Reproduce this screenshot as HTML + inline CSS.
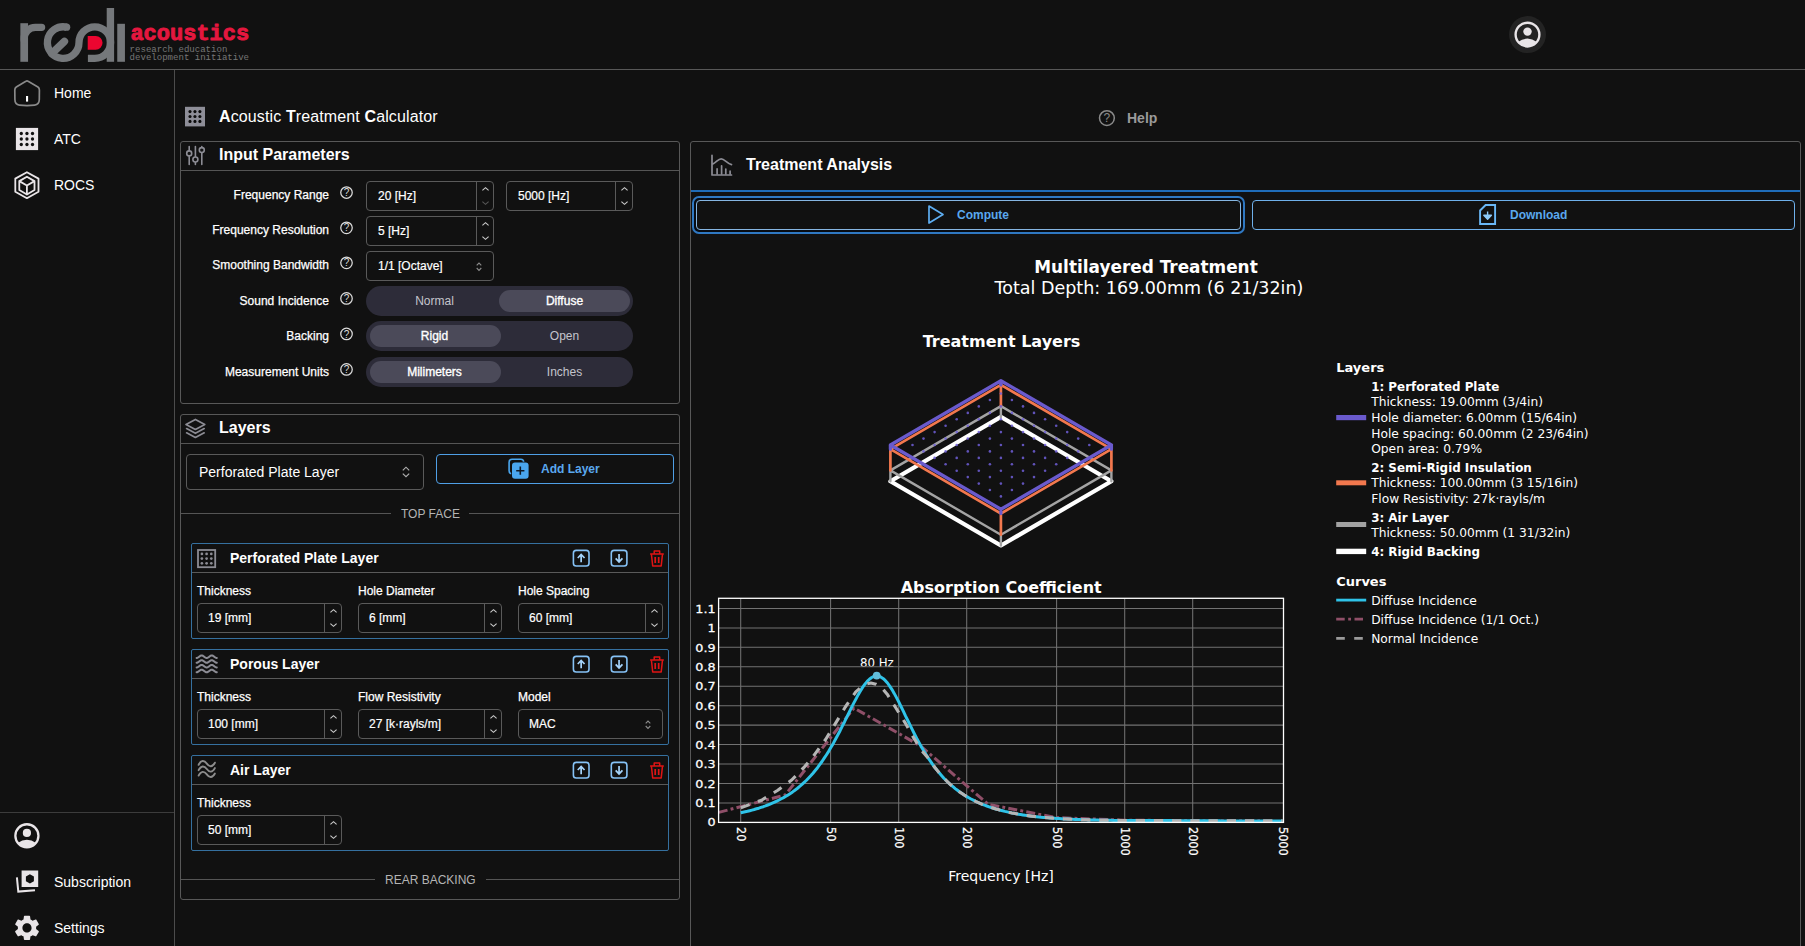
<!DOCTYPE html>
<html lang="en">
<head>
<meta charset="utf-8">
<title>Acoustic Treatment Calculator</title>
<style>
*{box-sizing:border-box}
html,body{margin:0;padding:0}
body{width:1805px;height:946px;overflow:hidden;background:#111111;color:#fff;font-family:"Liberation Sans",sans-serif;position:relative}
.abs{position:absolute}
.t{position:absolute;white-space:nowrap;line-height:16px}
.f12{font-size:12px;line-height:14px}
.f14{font-size:14px;line-height:16px}
.f16{font-size:16px;line-height:18px}
.b{font-weight:bold}
.m{-webkit-text-stroke:0.3px currentColor}
.hline{position:absolute;height:1px;background:#555}
.vline{position:absolute;width:1px;background:#555}
.panel{position:absolute;border:1px solid #585858;border-radius:3px}
.inp{position:absolute;border:1px solid #5a5a5a;border-radius:4px;height:30px;font-size:12px}
.inp .v{position:absolute;left:11px;top:7px;line-height:14px;white-space:nowrap;-webkit-text-stroke:0.2px #fff}
.inp .sep{position:absolute;right:16px;top:0;bottom:0;width:1px;background:#5a5a5a}
.inp svg{position:absolute;right:3px;top:0}
.tog{position:absolute;left:366px;width:267px;height:30px;border-radius:15px;background:#2d2c39}
.tog .sel{position:absolute;top:4px;height:22px;width:131px;border-radius:11px;background:#4b4a59}
.tog span{position:absolute;top:8px;width:131px;text-align:center;font-size:12px;line-height:14px;color:#c4c4cc}
.tog span.on{color:#fff;-webkit-text-stroke:0.35px #fff}
.card{position:absolute;left:191px;width:478px;height:96px;border:1px solid #35709f;border-radius:2px}
.card .hl{position:absolute;left:0;right:0;top:28px;height:1px;background:#5a5a5a}
.btn{position:absolute;border:1px solid #4f9fe6;border-radius:4px;height:30px}
.fig{position:absolute;left:0;top:0;pointer-events:none}
.lbl{position:absolute;font-size:12px;line-height:14px;white-space:nowrap;-webkit-text-stroke:0.25px #fff}
</style>
</head>
<body>
<!-- header -->
<div class="hline" style="left:0;top:69px;width:1805px;background:#585858"></div>
<svg class="fig" width="300" height="69" viewBox="0 0 300 69">
<g fill="none" stroke="#75787b" stroke-width="7.3">
<path d="M24.2 23.2 V61.8" stroke-width="7.7"/>
<path d="M24.2 40 V38.6 A11.2 11.2 0 0 1 35.4 27.3 H41.6" stroke-linecap="round"/>
<path d="M66.62 27.17 A15.8 15.8 0 1 0 79.00 42.6 A15.8 15.8 0 1 1 94.80 58.40 H87.9"/>
<path d="M51.83 53.58 L64.35 41.49" stroke-width="7.6" stroke-linecap="round"/>
<path d="M110.40 8 V61.8" stroke-width="7.4"/>
<path d="M121.1 23.8 V61.8" stroke-width="7.7"/>
</g>
<circle cx="66.62" cy="27.17" r="3.65" fill="#75787b"/>
<path d="M87.7 36 H95.7 A6.85 6.85 0 0 1 95.7 49.7 H87.7 Z" fill="#ec0630"/>
<text x="130.4" y="39.9" font-family="'Liberation Mono',monospace" font-weight="bold" font-size="22" fill="#e5173f" stroke="#e5173f" stroke-width="0.9" stroke-linejoin="round">acoustics</text>
<text x="129.6" y="51.7" font-family="'Liberation Mono',monospace" font-size="9.05" fill="#767676">research education</text>
<text x="129.6" y="60.4" font-family="'Liberation Mono',monospace" font-size="9.05" fill="#767676">development initiative</text>
</svg>
<!-- sidebar -->
<div class="vline" style="left:174px;top:70px;height:876px;background:#4c4c4c"></div>
<div class="hline" style="left:0;top:812px;width:174px;background:#3c3c3c"></div>
<div class="t f14" style="left:54px;top:85px">Home</div>
<div class="t f14" style="left:54px;top:131px">ATC</div>
<div class="t f14" style="left:54px;top:177px">ROCS</div>
<div class="t f14" style="left:54px;top:874px">Subscription</div>
<div class="t f14" style="left:54px;top:920px">Settings</div>
<!--SIDEICONS-->
<!-- title -->
<div class="t f16" style="left:219px;top:108px;letter-spacing:0.12px"><b>A</b>coustic <b>T</b>reatment <b>C</b>alculator</div>
<div class="t f14 b" style="left:1127px;top:110px;color:#9a9a9a">Help</div>
<!-- panel 1 -->
<div class="panel" style="left:180px;top:141px;width:500px;height:263px"></div>
<div class="hline" style="left:181px;top:170px;width:498px"></div>
<div class="t f16 b" style="left:219px;top:146px">Input Parameters</div>
<div class="lbl" style="right:1476px;top:188px">Frequency Range</div>
<div class="lbl" style="right:1476px;top:223px">Frequency Resolution</div>
<div class="lbl" style="right:1476px;top:258px">Smoothing Bandwidth</div>
<div class="lbl" style="right:1476px;top:294px">Sound Incidence</div>
<div class="lbl" style="right:1476px;top:329px">Backing</div>
<div class="lbl" style="right:1476px;top:365px">Measurement Units</div>
<div class="inp" style="left:366px;top:181px;width:128px"><span class="v">20 [Hz]</span><i class="sep"></i><svg width="11" height="28" viewBox="0 0 11 30" preserveAspectRatio="none" style="position:absolute;right:2.5px;top:0"><path d="M2.4 9 L5.5 6 L8.6 9" fill="none" stroke="#c8c8c8" stroke-width="1.1"/><path d="M2.4 21 L5.5 24 L8.6 21" fill="none" stroke="#555" stroke-width="1.1"/></svg></div>
<div class="inp" style="left:506px;top:181px;width:127px"><span class="v">5000 [Hz]</span><i class="sep"></i><svg width="11" height="28" viewBox="0 0 11 30" preserveAspectRatio="none" style="position:absolute;right:2.5px;top:0"><path d="M2.4 9 L5.5 6 L8.6 9" fill="none" stroke="#c8c8c8" stroke-width="1.1"/><path d="M2.4 21 L5.5 24 L8.6 21" fill="none" stroke="#c8c8c8" stroke-width="1.1"/></svg></div>
<div class="inp" style="left:366px;top:216px;width:128px"><span class="v">5 [Hz]</span><i class="sep"></i><svg width="11" height="28" viewBox="0 0 11 30" preserveAspectRatio="none" style="position:absolute;right:2.5px;top:0"><path d="M2.4 9 L5.5 6 L8.6 9" fill="none" stroke="#c8c8c8" stroke-width="1.1"/><path d="M2.4 21 L5.5 24 L8.6 21" fill="none" stroke="#c8c8c8" stroke-width="1.1"/></svg></div>
<div class="inp" style="left:366px;top:251px;width:128px"><span class="v">1/1 [Octave]</span><svg width="8" height="12" viewBox="0 0 8 12" style="position:absolute;right:10px;top:9.3px"><path d="M1.7 4.4 L4 2 L6.3 4.4 M1.7 7 L4 9.4 L6.3 7" fill="none" stroke="#8c8c8c" stroke-width="1.1"/></svg></div>
<div class="tog" style="top:286px"><i class="sel" style="left:133px"></i><span style="left:3px">Normal</span><span class="on" style="left:133px">Diffuse</span></div>
<div class="tog" style="top:321px"><i class="sel" style="left:4px"></i><span class="on" style="left:3px">Rigid</span><span style="left:133px">Open</span></div>
<div class="tog" style="top:357px"><i class="sel" style="left:4px"></i><span class="on" style="left:3px">Milimeters</span><span style="left:133px">Inches</span></div>
<!-- panel 2 -->
<div class="panel" style="left:180px;top:414px;width:500px;height:486px"></div>
<div class="hline" style="left:181px;top:443px;width:498px"></div>
<div class="t f16 b" style="left:219px;top:419px">Layers</div>
<div class="inp" style="left:186px;top:454px;width:238px;height:36px"><span class="v" style="left:12px;top:9px;font-size:14px;line-height:16px;-webkit-text-stroke:0">Perforated Plate Layer</span><svg width="10" height="14" viewBox="0 0 10 14" style="position:absolute;right:12.5px;top:9.7px"><path d="M1.8 5.3 L5 2.2 L8.2 5.3 M1.8 8.6 L5 11.7 L8.2 8.6" fill="none" stroke="#b0b0b0" stroke-width="1.15"/></svg></div>
<div class="btn" style="left:436px;top:454px;width:238px"></div>
<div class="t f12 b" style="left:541px;top:462px;color:#5aa8ee">Add Layer</div>
<div class="hline" style="left:181px;top:513px;width:210px"></div>
<div class="hline" style="left:469px;top:513px;width:210px"></div>
<div class="t f12" style="left:401px;top:507px;color:#b4b4b4">TOP FACE</div>
<div class="hline" style="left:181px;top:879px;width:194px"></div>
<div class="hline" style="left:486px;top:879px;width:193px"></div>
<div class="t f12" style="left:385px;top:873px;color:#b4b4b4">REAR BACKING</div>
<!-- cards -->
<div class="card" style="top:543px"><i class="hl"></i></div>
<div class="card" style="top:649px"><i class="hl"></i></div>
<div class="card" style="top:755px"><i class="hl"></i></div>
<div class="t f14 b" style="left:230px;top:550px">Perforated Plate Layer</div>
<div class="t f14 b" style="left:230px;top:656px">Porous Layer</div>
<div class="t f14 b" style="left:230px;top:762px">Air Layer</div>
<div class="lbl" style="left:197px;top:584px">Thickness</div>
<div class="lbl" style="left:358px;top:584px">Hole Diameter</div>
<div class="lbl" style="left:518px;top:584px">Hole Spacing</div>
<div class="lbl" style="left:197px;top:690px">Thickness</div>
<div class="lbl" style="left:358px;top:690px">Flow Resistivity</div>
<div class="lbl" style="left:518px;top:690px">Model</div>
<div class="lbl" style="left:197px;top:796px">Thickness</div>
<div class="inp" style="left:197px;top:603px;width:145px;height:30px"><span class="v" style="left:10px">19 [mm]</span><i class="sep"></i><svg width="11" height="28" viewBox="0 0 11 30" preserveAspectRatio="none" style="position:absolute;right:2.5px;top:0"><path d="M2.4 9 L5.5 6 L8.6 9" fill="none" stroke="#c8c8c8" stroke-width="1.1"/><path d="M2.4 21 L5.5 24 L8.6 21" fill="none" stroke="#c8c8c8" stroke-width="1.1"/></svg></div>
<div class="inp" style="left:358px;top:603px;width:144px;height:30px"><span class="v" style="left:10px">6 [mm]</span><i class="sep"></i><svg width="11" height="28" viewBox="0 0 11 30" preserveAspectRatio="none" style="position:absolute;right:2.5px;top:0"><path d="M2.4 9 L5.5 6 L8.6 9" fill="none" stroke="#c8c8c8" stroke-width="1.1"/><path d="M2.4 21 L5.5 24 L8.6 21" fill="none" stroke="#c8c8c8" stroke-width="1.1"/></svg></div>
<div class="inp" style="left:518px;top:603px;width:145px;height:30px"><span class="v" style="left:10px">60 [mm]</span><i class="sep"></i><svg width="11" height="28" viewBox="0 0 11 30" preserveAspectRatio="none" style="position:absolute;right:2.5px;top:0"><path d="M2.4 9 L5.5 6 L8.6 9" fill="none" stroke="#c8c8c8" stroke-width="1.1"/><path d="M2.4 21 L5.5 24 L8.6 21" fill="none" stroke="#c8c8c8" stroke-width="1.1"/></svg></div>
<div class="inp" style="left:197px;top:709px;width:145px;height:30px"><span class="v" style="left:10px">100 [mm]</span><i class="sep"></i><svg width="11" height="28" viewBox="0 0 11 30" preserveAspectRatio="none" style="position:absolute;right:2.5px;top:0"><path d="M2.4 9 L5.5 6 L8.6 9" fill="none" stroke="#c8c8c8" stroke-width="1.1"/><path d="M2.4 21 L5.5 24 L8.6 21" fill="none" stroke="#c8c8c8" stroke-width="1.1"/></svg></div>
<div class="inp" style="left:358px;top:709px;width:144px;height:30px"><span class="v" style="left:10px">27 [k·rayls/m]</span><i class="sep"></i><svg width="11" height="28" viewBox="0 0 11 30" preserveAspectRatio="none" style="position:absolute;right:2.5px;top:0"><path d="M2.4 9 L5.5 6 L8.6 9" fill="none" stroke="#c8c8c8" stroke-width="1.1"/><path d="M2.4 21 L5.5 24 L8.6 21" fill="none" stroke="#c8c8c8" stroke-width="1.1"/></svg></div>
<div class="inp" style="left:518px;top:709px;width:145px;height:30px"><span class="v" style="left:10px">MAC</span><svg width="8" height="12" viewBox="0 0 8 12" style="position:absolute;right:10px;top:9.3px"><path d="M1.7 4.4 L4 2 L6.3 4.4 M1.7 7 L4 9.4 L6.3 7" fill="none" stroke="#8c8c8c" stroke-width="1.1"/></svg></div>
<div class="inp" style="left:197px;top:815px;width:145px;height:30px"><span class="v" style="left:10px">50 [mm]</span><i class="sep"></i><svg width="11" height="28" viewBox="0 0 11 30" preserveAspectRatio="none" style="position:absolute;right:2.5px;top:0"><path d="M2.4 9 L5.5 6 L8.6 9" fill="none" stroke="#c8c8c8" stroke-width="1.1"/><path d="M2.4 21 L5.5 24 L8.6 21" fill="none" stroke="#c8c8c8" stroke-width="1.1"/></svg></div>
<!-- right panel -->
<div class="abs" style="left:690px;top:141px;width:1111px;height:820px;border:1px solid #585858;border-radius:3px"></div>
<div class="abs" style="left:691px;top:190px;width:1109px;height:2px;background:#1f6cb8"></div>
<div class="t f16 b" style="left:746px;top:156px">Treatment Analysis</div>
<div class="abs" style="left:692px;top:196px;width:553px;height:38px;border:2px solid #2f78c2;border-radius:7px;background:#070b12"></div>
<div class="btn" style="left:696px;top:200px;width:545px;background:#111;border-color:#86b6e2"></div>
<div class="btn" style="left:1252px;top:200px;width:543px;border-color:#6fb0ea"></div>
<div class="t f12 b" style="left:957px;top:208px;color:#5aa8ee">Compute</div>
<div class="t f12 b" style="left:1510px;top:208px;color:#5aa8ee">Download</div>
<svg class="fig" width="1805" height="946" viewBox="0 0 1805 946"><path d="M25.9 81.2 Q27 80.5 28.1 81.2 L37.9 87 Q39.4 88 39.4 90 L39.3 99.6 Q39.2 104.7 34.6 105.2 Q27 106 19.4 105.2 Q14.9 104.7 14.9 99.6 L14.8 90 Q14.8 88 16.3 87 Z" fill="none" stroke="#8a8a8a" stroke-width="1.7" stroke-linejoin="round"/>
<rect x="26" y="96" width="2.1" height="5.6" fill="#fff"/>
<rect x="15.9" y="127.9" width="22.2" height="22.2" fill="#e9e5e8"/>
<circle cx="21.3" cy="133.5" r="1.65" fill="#111"/>
<circle cx="21.3" cy="139" r="1.65" fill="#111"/>
<circle cx="21.3" cy="144.5" r="1.65" fill="#111"/>
<circle cx="26.95" cy="133.5" r="1.65" fill="#111"/>
<circle cx="26.95" cy="139" r="1.65" fill="#111"/>
<circle cx="26.95" cy="144.5" r="1.65" fill="#111"/>
<circle cx="32.5" cy="133.5" r="1.65" fill="#111"/>
<circle cx="32.5" cy="139" r="1.65" fill="#111"/>
<circle cx="32.5" cy="144.5" r="1.65" fill="#111"/>
<g fill="none" stroke="#e9e5e8" stroke-width="1.8" stroke-linejoin="round"><path d="M26.9 172.2 L38.5 178.6 V191.8 L26.9 198.2 L15.3 191.8 V178.6 Z"/><path d="M26.9 176.7 L34.5 181.1 V190 L26.9 194.5 L19.3 190 V181.1 Z"/><path d="M19.3 181.1 L26.9 185.5 L34.5 181.1 M26.9 185.5 V194.5"/></g>
<g transform="translate(26.9 835.8) scale(1.0)"><circle cx="0" cy="0" r="11.55" fill="none" stroke="#e9e5e8" stroke-width="2.3"/><circle cx="0" cy="-2.9" r="4.1" fill="#e9e5e8"/><path d="M-9.2 7.3 Q0 0.4 9.2 7.3 A11.75 11.75 0 0 1 -9.2 7.3 Z" fill="#e9e5e8"/></g>
<path d="M21.6 870.6 H38.2 V887 H21.6 Z M29.9 874.2 L33.9 876.5 V881.2 L29.9 883.5 L25.9 881.2 V876.5 Z" fill="#e9e5e8" fill-rule="evenodd"/>
<path d="M16.9 877.4 L18.3 891.6 L35 890.2" fill="none" stroke="#e9e5e8" stroke-width="2"/>
<path transform="translate(11.76 912.66) scale(1.27)" d="M19.14 12.94c.04-.3.06-.61.06-.94 0-.32-.02-.64-.07-.94l2.03-1.58c.18-.14.23-.41.12-.61l-1.92-3.32c-.12-.22-.37-.29-.59-.22l-2.39.96c-.5-.38-1.03-.7-1.62-.94l-.36-2.54c-.04-.24-.24-.41-.48-.41h-3.84c-.24 0-.43.17-.47.41l-.36 2.54c-.59.24-1.13.57-1.62.94l-2.39-.96c-.22-.08-.47 0-.59.22L2.74 8.87c-.12.21-.08.47.12.61l2.03 1.58c-.05.3-.09.63-.09.94s.02.64.07.94l-2.03 1.58c-.18.14-.23.41-.12.61l1.92 3.32c.12.22.37.29.59.22l2.39-.96c.5.38 1.03.7 1.62.94l.36 2.54c.05.24.24.41.48.41h3.84c.24 0 .44-.17.47-.41l.36-2.54c.59-.24 1.13-.56 1.62-.94l2.39.96c.22.08.47 0 .59-.22l1.92-3.32c.12-.22.07-.47-.12-.61l-2.01-1.58zM12 15.6c-1.98 0-3.6-1.62-3.6-3.6s1.62-3.6 3.6-3.6 3.6 1.62 3.6 3.6-1.62 3.6-3.6 3.6z" fill="#e9e5e8"/>
<circle cx="1527.5" cy="34.6" r="18.5" fill="#232323"/>
<g transform="translate(1527.5 34.6) scale(1.03)"><circle cx="0" cy="0" r="11.55" fill="none" stroke="#e9e5e8" stroke-width="2.3"/><circle cx="0" cy="-2.9" r="4.1" fill="#e9e5e8"/><path d="M-9.2 7.3 Q0 0.4 9.2 7.3 A11.75 11.75 0 0 1 -9.2 7.3 Z" fill="#e9e5e8"/></g>
<rect x="185" y="106.8" width="20" height="19.6" fill="#8e8e98"/>
<circle cx="190" cy="111.6" r="1.55" fill="#0c0c0c"/>
<circle cx="190" cy="116.5" r="1.55" fill="#0c0c0c"/>
<circle cx="190" cy="121.4" r="1.55" fill="#0c0c0c"/>
<circle cx="194.95" cy="111.6" r="1.55" fill="#0c0c0c"/>
<circle cx="194.95" cy="116.5" r="1.55" fill="#0c0c0c"/>
<circle cx="194.95" cy="121.4" r="1.55" fill="#0c0c0c"/>
<circle cx="199.9" cy="111.6" r="1.55" fill="#0c0c0c"/>
<circle cx="199.9" cy="116.5" r="1.55" fill="#0c0c0c"/>
<circle cx="199.9" cy="121.4" r="1.55" fill="#0c0c0c"/>
<circle cx="1106.9" cy="118.1" r="7.4" fill="none" stroke="#8a8a8a" stroke-width="1.5"/>
<text x="1106.9" y="122.4" text-anchor="middle" font-family="'Liberation Sans',sans-serif" font-size="12" fill="#8a8a8a">?</text>
<circle cx="346.5" cy="192.5" r="5.75" fill="none" stroke="#dcdcdc" stroke-width="1.25"/>
<text x="346.5" y="196.1" text-anchor="middle" font-family="'Liberation Sans',sans-serif" font-size="10" fill="#dcdcdc">?</text>
<circle cx="346.5" cy="227.8" r="5.75" fill="none" stroke="#dcdcdc" stroke-width="1.25"/>
<text x="346.5" y="231.4" text-anchor="middle" font-family="'Liberation Sans',sans-serif" font-size="10" fill="#dcdcdc">?</text>
<circle cx="346.5" cy="262.8" r="5.75" fill="none" stroke="#dcdcdc" stroke-width="1.25"/>
<text x="346.5" y="266.4" text-anchor="middle" font-family="'Liberation Sans',sans-serif" font-size="10" fill="#dcdcdc">?</text>
<circle cx="346.5" cy="298.4" r="5.75" fill="none" stroke="#dcdcdc" stroke-width="1.25"/>
<text x="346.5" y="302.0" text-anchor="middle" font-family="'Liberation Sans',sans-serif" font-size="10" fill="#dcdcdc">?</text>
<circle cx="346.5" cy="333.9" r="5.75" fill="none" stroke="#dcdcdc" stroke-width="1.25"/>
<text x="346.5" y="337.5" text-anchor="middle" font-family="'Liberation Sans',sans-serif" font-size="10" fill="#dcdcdc">?</text>
<circle cx="346.5" cy="369.4" r="5.75" fill="none" stroke="#dcdcdc" stroke-width="1.25"/>
<text x="346.5" y="373.0" text-anchor="middle" font-family="'Liberation Sans',sans-serif" font-size="10" fill="#dcdcdc">?</text>
<g fill="none" stroke="#8c8c94" stroke-width="1.6" stroke-linecap="round"><path d="M189.2 146.5 V164.5 M195.4 146.5 V164.5 M201.8 146.5 V164.5"/></g>
<circle cx="189.2" cy="153.4" r="2.5" fill="#111" stroke="#8c8c94" stroke-width="1.6"/>
<circle cx="195.4" cy="159.5" r="2.5" fill="#111" stroke="#8c8c94" stroke-width="1.6"/>
<circle cx="201.8" cy="150.1" r="2.5" fill="#111" stroke="#8c8c94" stroke-width="1.6"/>
<g fill="none" stroke="#8c8c94" stroke-width="1.7" stroke-linejoin="round" stroke-linecap="round"><path d="M195.4 419.4 L204.8 424.4 L195.4 429.4 L186 424.4 Z"/><path d="M186.6 428.6 L195.4 433.3 L204.2 428.6"/><path d="M186.6 432.8 L195.4 437.5 L204.2 432.8"/></g>
<g fill="none" stroke="#8c8c94" stroke-width="1.7" stroke-linecap="round" stroke-linejoin="round"><path d="M712 155.3 V175 H731.5"/><path d="M712.8 164 C716.5 162.5 718 158.8 721.2 158.8 C724.5 158.8 727 163.5 731.5 164.6"/><path d="M717.1 168.8 V174 M721.6 165.8 V174 M725.8 169 V174 M730.1 171.2 V174"/></g>
<rect x="198" y="550" width="17.2" height="17.2" fill="none" stroke="#8c8c94" stroke-width="1.8"/>
<circle cx="201.9" cy="553.9" r="1.35" fill="#8c8c94"/>
<circle cx="201.9" cy="558.6" r="1.35" fill="#8c8c94"/>
<circle cx="201.9" cy="563.3" r="1.35" fill="#8c8c94"/>
<circle cx="206.6" cy="553.9" r="1.35" fill="#8c8c94"/>
<circle cx="206.6" cy="558.6" r="1.35" fill="#8c8c94"/>
<circle cx="206.6" cy="563.3" r="1.35" fill="#8c8c94"/>
<circle cx="211.3" cy="553.9" r="1.35" fill="#8c8c94"/>
<circle cx="211.3" cy="558.6" r="1.35" fill="#8c8c94"/>
<circle cx="211.3" cy="563.3" r="1.35" fill="#8c8c94"/>
<path d="M196.60 657.95 L197.10 657.89 L197.61 657.71 L198.12 657.43 L198.62 657.09 L199.12 656.70 L199.63 656.31 L200.13 655.97 L200.64 655.69 L201.15 655.51 L201.65 655.45 L202.16 655.51 L202.66 655.69 L203.16 655.97 L203.67 656.31 L204.18 656.70 L204.68 657.09 L205.19 657.43 L205.69 657.71 L206.19 657.89 L206.70 657.95 L207.21 657.89 L207.71 657.71 L208.22 657.43 L208.72 657.09 L209.22 656.70 L209.73 656.31 L210.24 655.97 L210.74 655.69 L211.25 655.51 L211.75 655.45 L212.25 655.51 L212.76 655.69 L213.27 655.97 L213.77 656.31 L214.28 656.70 L214.78 657.09 L215.29 657.43 L215.79 657.71 L216.30 657.89 L216.80 657.95" fill="none" stroke="#8c8c94" stroke-width="2" stroke-linecap="round" stroke-linejoin="round"/>
<path d="M196.60 662.75 L197.10 662.69 L197.61 662.51 L198.12 662.23 L198.62 661.89 L199.12 661.50 L199.63 661.11 L200.13 660.77 L200.64 660.49 L201.15 660.31 L201.65 660.25 L202.16 660.31 L202.66 660.49 L203.16 660.77 L203.67 661.11 L204.18 661.50 L204.68 661.89 L205.19 662.23 L205.69 662.51 L206.19 662.69 L206.70 662.75 L207.21 662.69 L207.71 662.51 L208.22 662.23 L208.72 661.89 L209.22 661.50 L209.73 661.11 L210.24 660.77 L210.74 660.49 L211.25 660.31 L211.75 660.25 L212.25 660.31 L212.76 660.49 L213.27 660.77 L213.77 661.11 L214.28 661.50 L214.78 661.89 L215.29 662.23 L215.79 662.51 L216.30 662.69 L216.80 662.75" fill="none" stroke="#8c8c94" stroke-width="2" stroke-linecap="round" stroke-linejoin="round"/>
<path d="M196.60 667.45 L197.10 667.39 L197.61 667.21 L198.12 666.93 L198.62 666.59 L199.12 666.20 L199.63 665.81 L200.13 665.47 L200.64 665.19 L201.15 665.01 L201.65 664.95 L202.16 665.01 L202.66 665.19 L203.16 665.47 L203.67 665.81 L204.18 666.20 L204.68 666.59 L205.19 666.93 L205.69 667.21 L206.19 667.39 L206.70 667.45 L207.21 667.39 L207.71 667.21 L208.22 666.93 L208.72 666.59 L209.22 666.20 L209.73 665.81 L210.24 665.47 L210.74 665.19 L211.25 665.01 L211.75 664.95 L212.25 665.01 L212.76 665.19 L213.27 665.47 L213.77 665.81 L214.28 666.20 L214.78 666.59 L215.29 666.93 L215.79 667.21 L216.30 667.39 L216.80 667.45" fill="none" stroke="#8c8c94" stroke-width="2" stroke-linecap="round" stroke-linejoin="round"/>
<path d="M196.60 672.25 L197.10 672.19 L197.61 672.01 L198.12 671.73 L198.62 671.39 L199.12 671.00 L199.63 670.61 L200.13 670.27 L200.64 669.99 L201.15 669.81 L201.65 669.75 L202.16 669.81 L202.66 669.99 L203.16 670.27 L203.67 670.61 L204.18 671.00 L204.68 671.39 L205.19 671.73 L205.69 672.01 L206.19 672.19 L206.70 672.25 L207.21 672.19 L207.71 672.01 L208.22 671.73 L208.72 671.39 L209.22 671.00 L209.73 670.61 L210.24 670.27 L210.74 669.99 L211.25 669.81 L211.75 669.75 L212.25 669.81 L212.76 669.99 L213.27 670.27 L213.77 670.61 L214.28 671.00 L214.78 671.39 L215.29 671.73 L215.79 672.01 L216.30 672.19 L216.80 672.25" fill="none" stroke="#8c8c94" stroke-width="2" stroke-linecap="round" stroke-linejoin="round"/>
<path d="M198.6 764.8 C201 760.0 204.2 760.0 206.8 763.6 C209.4 767.2 212.4 767.2 214.9 762.7" fill="none" stroke="#8c8c8c" stroke-width="1.9" stroke-linecap="round"/>
<path d="M198.6 770.2 C201 765.4 204.2 765.4 206.8 769.0 C209.4 772.6 212.4 772.6 214.9 768.1" fill="none" stroke="#8c8c8c" stroke-width="1.9" stroke-linecap="round"/>
<path d="M198.6 775.6 C201 770.8 204.2 770.8 206.8 774.4 C209.4 778.0 212.4 778.0 214.9 773.5" fill="none" stroke="#8c8c8c" stroke-width="1.9" stroke-linecap="round"/>
<rect x="573.4" y="550.4" width="15.6" height="15.6" rx="2.8" fill="none" stroke="#86c2f6" stroke-width="1.6"/>
<path d="M581.15 562.2 V554.6 M577.75 558 L581.15 554.4 L584.55 558" fill="none" stroke="#a5d3fa" stroke-width="1.7"/>
<rect x="611.3" y="550.4" width="15.6" height="15.6" rx="2.8" fill="none" stroke="#86c2f6" stroke-width="1.6"/>
<path d="M619.05 554.1 V561.7 M615.65 558.3 L619.05 561.9 L622.4499999999999 558.3" fill="none" stroke="#a5d3fa" stroke-width="1.7"/>
<g fill="none" stroke="#e01414" stroke-width="1.5" stroke-linejoin="round"><path d="M650.0999999999999 553.9 H663.8 M654.1999999999999 553.6999999999999 V550.9 H659.6999999999999 V553.6999999999999"/><path d="M651.4 554.0999999999999 L652.6999999999999 565.9 H661.1999999999999 L662.5 554.0999999999999"/><path d="M655.1999999999999 556.9 V562.9 M658.6999999999999 556.9 V562.9" stroke-width="1.7"/></g>
<rect x="573.4" y="656.4" width="15.6" height="15.6" rx="2.8" fill="none" stroke="#86c2f6" stroke-width="1.6"/>
<path d="M581.15 668.2 V660.6 M577.75 664 L581.15 660.4 L584.55 664" fill="none" stroke="#a5d3fa" stroke-width="1.7"/>
<rect x="611.3" y="656.4" width="15.6" height="15.6" rx="2.8" fill="none" stroke="#86c2f6" stroke-width="1.6"/>
<path d="M619.05 660.1 V667.7 M615.65 664.3 L619.05 667.9 L622.4499999999999 664.3" fill="none" stroke="#a5d3fa" stroke-width="1.7"/>
<g fill="none" stroke="#e01414" stroke-width="1.5" stroke-linejoin="round"><path d="M650.0999999999999 659.9 H663.8 M654.1999999999999 659.6999999999999 V656.9 H659.6999999999999 V659.6999999999999"/><path d="M651.4 660.0999999999999 L652.6999999999999 671.9 H661.1999999999999 L662.5 660.0999999999999"/><path d="M655.1999999999999 662.9 V668.9 M658.6999999999999 662.9 V668.9" stroke-width="1.7"/></g>
<rect x="573.4" y="762.4" width="15.6" height="15.6" rx="2.8" fill="none" stroke="#86c2f6" stroke-width="1.6"/>
<path d="M581.15 774.2 V766.6 M577.75 770 L581.15 766.4 L584.55 770" fill="none" stroke="#a5d3fa" stroke-width="1.7"/>
<rect x="611.3" y="762.4" width="15.6" height="15.6" rx="2.8" fill="none" stroke="#86c2f6" stroke-width="1.6"/>
<path d="M619.05 766.1 V773.7 M615.65 770.3 L619.05 773.9 L622.4499999999999 770.3" fill="none" stroke="#a5d3fa" stroke-width="1.7"/>
<g fill="none" stroke="#e01414" stroke-width="1.5" stroke-linejoin="round"><path d="M650.0999999999999 765.9 H663.8 M654.1999999999999 765.6999999999999 V762.9 H659.6999999999999 V765.6999999999999"/><path d="M651.4 766.0999999999999 L652.6999999999999 777.9 H661.1999999999999 L662.5 766.0999999999999"/><path d="M655.1999999999999 768.9 V774.9 M658.6999999999999 768.9 V774.9" stroke-width="1.7"/></g>
<path d="M929 206 L943 214.5 L929 223 Z" fill="none" stroke="#5eaef2" stroke-width="1.7" stroke-linejoin="round"/>
<path d="M1485.6 205 H1495.1 V224 H1480.1 V210.5 Z" fill="none" stroke="#6ab8f7" stroke-width="1.9" stroke-linejoin="miter"/>
<path d="M1487.6 211.4 V216 M1483.8 215.2 H1491.4 L1487.6 219.2 Z" fill="#8ccafa" stroke="#8ccafa" stroke-width="1.4" stroke-linejoin="round"/>
<rect x="509.1" y="459.2" width="14.6" height="14.6" rx="3" fill="none" stroke="#4aa6ee" stroke-width="1.6"/>
<rect x="511.2" y="461.8" width="18" height="17.6" rx="3.4" fill="#111"/>
<rect x="512" y="462.5" width="16.6" height="16.3" rx="3" fill="#4aa6ee"/>
<path d="M520.3 466.6 V474.8 M516.2 470.7 H524.4" stroke="#0e1a28" stroke-width="1.6"/></svg>

<svg class="fig" width="1805" height="946" viewBox="0 0 1805 946">
<g font-family="'DejaVu Sans','Liberation Sans',sans-serif" fill="#fff">
<text x="1146" y="272.7" text-anchor="middle" font-size="16.9" font-weight="bold">Multilayered Treatment</text>
<text x="1149" y="294.4" text-anchor="middle" font-size="17.5">Total Depth: 169.00mm (6 21/32in)</text>
<text x="1001.5" y="347.1" text-anchor="middle" font-size="16" font-weight="bold">Treatment Layers</text>
<text x="1001.2" y="593.4" text-anchor="middle" font-size="16" font-weight="bold">Absorption Coefficient</text>
<text x="1001" y="880.8" text-anchor="middle" font-size="14">Frequency [Hz]</text>
<g font-size="11.3"><text transform="translate(715.6 826.4) scale(1.13 1)" x="0" y="0" text-anchor="end" stroke="#fff" stroke-width="0.25">0</text><text transform="translate(715.6 807.0) scale(1.13 1)" x="0" y="0" text-anchor="end" stroke="#fff" stroke-width="0.25">0.1</text><text transform="translate(715.6 787.6) scale(1.13 1)" x="0" y="0" text-anchor="end" stroke="#fff" stroke-width="0.25">0.2</text><text transform="translate(715.6 768.1) scale(1.13 1)" x="0" y="0" text-anchor="end" stroke="#fff" stroke-width="0.25">0.3</text><text transform="translate(715.6 748.7) scale(1.13 1)" x="0" y="0" text-anchor="end" stroke="#fff" stroke-width="0.25">0.4</text><text transform="translate(715.6 729.2) scale(1.13 1)" x="0" y="0" text-anchor="end" stroke="#fff" stroke-width="0.25">0.5</text><text transform="translate(715.6 709.8) scale(1.13 1)" x="0" y="0" text-anchor="end" stroke="#fff" stroke-width="0.25">0.6</text><text transform="translate(715.6 690.4) scale(1.13 1)" x="0" y="0" text-anchor="end" stroke="#fff" stroke-width="0.25">0.7</text><text transform="translate(715.6 670.9) scale(1.13 1)" x="0" y="0" text-anchor="end" stroke="#fff" stroke-width="0.25">0.8</text><text transform="translate(715.6 651.5) scale(1.13 1)" x="0" y="0" text-anchor="end" stroke="#fff" stroke-width="0.25">0.9</text><text transform="translate(715.6 632.0) scale(1.13 1)" x="0" y="0" text-anchor="end" stroke="#fff" stroke-width="0.25">1</text><text transform="translate(715.6 612.6) scale(1.13 1)" x="0" y="0" text-anchor="end" stroke="#fff" stroke-width="0.25">1.1</text><text transform="translate(741.3 827.0) scale(1.13 1) rotate(90)" x="0" y="4.1" stroke="#fff" stroke-width="0.2">20</text><text transform="translate(831.2 827.0) scale(1.13 1) rotate(90)" x="0" y="4.1" stroke="#fff" stroke-width="0.2">50</text><text transform="translate(899.3 827.0) scale(1.13 1) rotate(90)" x="0" y="4.1" stroke="#fff" stroke-width="0.2">100</text><text transform="translate(967.3 827.0) scale(1.13 1) rotate(90)" x="0" y="4.1" stroke="#fff" stroke-width="0.2">200</text><text transform="translate(1057.2 827.0) scale(1.13 1) rotate(90)" x="0" y="4.1" stroke="#fff" stroke-width="0.2">500</text><text transform="translate(1125.3 827.0) scale(1.13 1) rotate(90)" x="0" y="4.1" stroke="#fff" stroke-width="0.2">1000</text><text transform="translate(1193.3 827.0) scale(1.13 1) rotate(90)" x="0" y="4.1" stroke="#fff" stroke-width="0.2">2000</text><text transform="translate(1283.2 827.0) scale(1.13 1) rotate(90)" x="0" y="4.1" stroke="#fff" stroke-width="0.2">5000</text></g>
<text x="876.8" y="666.6" text-anchor="middle" font-size="11.8">80 Hz</text>
</g>

<g fill="none" stroke-linejoin="round" stroke-linecap="round">
<path d="M1000.9 416.9 L1111.4 481.2 L1000.9 545.5 L890.4 481.2Z" stroke="#ffffff" stroke-width="4.2"/>
<path d="M1000.9 406.1 L1111.4 470.4 L1000.9 534.7 L890.4 470.4Z M1000.9 406.1 V416.9 M1111.4 470.4 V481.2 M1000.9 534.7 V545.5 M890.4 470.4 V481.2 " stroke="#a4a4a4" stroke-width="2.4"/>
<path d="M1000.9 384.9 L1111.4 449.2 L1000.9 513.5 L890.4 449.2Z M1000.9 384.9 V406.1 M1111.4 449.2 V470.4 M1000.9 513.5 V534.7 M890.4 449.2 V470.4 " stroke="#f2784e" stroke-width="2.7"/>
<g fill="#6f5fd8" stroke="none" opacity="0.85"><circle cx="1000.9" cy="393.6" r="1.3"/><circle cx="989.9" cy="400.0" r="1.3"/><circle cx="978.8" cy="406.4" r="1.3"/><circle cx="967.8" cy="412.9" r="1.3"/><circle cx="956.7" cy="419.3" r="1.3"/><circle cx="945.6" cy="425.7" r="1.3"/><circle cx="934.6" cy="432.1" r="1.3"/><circle cx="923.5" cy="438.6" r="1.3"/><circle cx="912.5" cy="445.0" r="1.3"/><circle cx="1011.9" cy="400.0" r="1.3"/><circle cx="1000.9" cy="406.4" r="1.3"/><circle cx="989.9" cy="412.9" r="1.3"/><circle cx="978.8" cy="419.3" r="1.3"/><circle cx="967.8" cy="425.7" r="1.3"/><circle cx="956.7" cy="432.1" r="1.3"/><circle cx="945.6" cy="438.6" r="1.3"/><circle cx="934.6" cy="445.0" r="1.3"/><circle cx="923.5" cy="451.4" r="1.3"/><circle cx="1023.0" cy="406.4" r="1.3"/><circle cx="1011.9" cy="412.9" r="1.3"/><circle cx="1000.9" cy="419.3" r="1.3"/><circle cx="989.9" cy="425.7" r="1.3"/><circle cx="978.8" cy="432.1" r="1.3"/><circle cx="967.8" cy="438.6" r="1.3"/><circle cx="956.7" cy="445.0" r="1.3"/><circle cx="945.6" cy="451.4" r="1.3"/><circle cx="934.6" cy="457.9" r="1.3"/><circle cx="1034.0" cy="412.9" r="1.3"/><circle cx="1023.0" cy="419.3" r="1.3"/><circle cx="1011.9" cy="425.7" r="1.3"/><circle cx="1000.9" cy="432.1" r="1.3"/><circle cx="989.9" cy="438.6" r="1.3"/><circle cx="978.8" cy="445.0" r="1.3"/><circle cx="967.8" cy="451.4" r="1.3"/><circle cx="956.7" cy="457.9" r="1.3"/><circle cx="945.6" cy="464.3" r="1.3"/><circle cx="1045.1" cy="419.3" r="1.3"/><circle cx="1034.0" cy="425.7" r="1.3"/><circle cx="1023.0" cy="432.1" r="1.3"/><circle cx="1011.9" cy="438.6" r="1.3"/><circle cx="1000.9" cy="445.0" r="1.3"/><circle cx="989.9" cy="451.4" r="1.3"/><circle cx="978.8" cy="457.9" r="1.3"/><circle cx="967.8" cy="464.3" r="1.3"/><circle cx="956.7" cy="470.7" r="1.3"/><circle cx="1056.2" cy="425.7" r="1.3"/><circle cx="1045.1" cy="432.1" r="1.3"/><circle cx="1034.0" cy="438.6" r="1.3"/><circle cx="1023.0" cy="445.0" r="1.3"/><circle cx="1011.9" cy="451.4" r="1.3"/><circle cx="1000.9" cy="457.9" r="1.3"/><circle cx="989.9" cy="464.3" r="1.3"/><circle cx="978.8" cy="470.7" r="1.3"/><circle cx="967.8" cy="477.1" r="1.3"/><circle cx="1067.2" cy="432.1" r="1.3"/><circle cx="1056.2" cy="438.6" r="1.3"/><circle cx="1045.1" cy="445.0" r="1.3"/><circle cx="1034.0" cy="451.4" r="1.3"/><circle cx="1023.0" cy="457.9" r="1.3"/><circle cx="1011.9" cy="464.3" r="1.3"/><circle cx="1000.9" cy="470.7" r="1.3"/><circle cx="989.9" cy="477.1" r="1.3"/><circle cx="978.8" cy="483.6" r="1.3"/><circle cx="1078.2" cy="438.6" r="1.3"/><circle cx="1067.2" cy="445.0" r="1.3"/><circle cx="1056.2" cy="451.4" r="1.3"/><circle cx="1045.1" cy="457.9" r="1.3"/><circle cx="1034.0" cy="464.3" r="1.3"/><circle cx="1023.0" cy="470.7" r="1.3"/><circle cx="1011.9" cy="477.1" r="1.3"/><circle cx="1000.9" cy="483.6" r="1.3"/><circle cx="989.9" cy="490.0" r="1.3"/><circle cx="1089.3" cy="445.0" r="1.3"/><circle cx="1078.2" cy="451.4" r="1.3"/><circle cx="1067.2" cy="457.9" r="1.3"/><circle cx="1056.2" cy="464.3" r="1.3"/><circle cx="1045.1" cy="470.7" r="1.3"/><circle cx="1034.0" cy="477.1" r="1.3"/><circle cx="1023.0" cy="483.6" r="1.3"/><circle cx="1011.9" cy="490.0" r="1.3"/><circle cx="1000.9" cy="496.4" r="1.3"/></g>
<path d="M1000.9 380.7 L1111.4 445.0 L1000.9 509.3 L890.4 445.0Z M1000.9 380.7 V384.9 M1111.4 445.0 V449.2 M1000.9 509.3 V513.5 M890.4 445.0 V449.2 " stroke="#6a5acd" stroke-width="3.3"/>
</g>
<g stroke="#727272" stroke-width="1.05" fill="none"><path d="M740.7 598.3 V822.4"/><path d="M830.6 598.3 V822.4"/><path d="M898.7 598.3 V822.4"/><path d="M966.7 598.3 V822.4"/><path d="M1056.6 598.3 V822.4"/><path d="M1124.7 598.3 V822.4"/><path d="M1192.7 598.3 V822.4"/><path d="M718.6 802.9 H1283.5"/><path d="M718.6 783.4 H1283.5"/><path d="M718.6 764.0 H1283.5"/><path d="M718.6 744.5 H1283.5"/><path d="M718.6 725.1 H1283.5"/><path d="M718.6 705.7 H1283.5"/><path d="M718.6 686.2 H1283.5"/><path d="M718.6 666.8 H1283.5"/><path d="M718.6 647.3 H1283.5"/><path d="M718.6 627.9 H1283.5"/><path d="M718.6 608.5 H1283.5"/></g>
<g fill="none" stroke-linejoin="round">
<path d="M718.8 812.4 L785.2 795.0 L854.0 708.0 L920.3 745.8 L988.2 804.3 L1056.1 817.6 L1124.0 820.2 L1192.0 820.6 L1260.0 820.8" stroke="#8f4f68" stroke-width="3" stroke-dasharray="9 3.2 2.9 3.2"/>
<path d="M740.7 812.8 L743.0 812.3 L745.2 811.8 L747.5 811.3 L749.7 810.7 L752.0 810.1 L754.2 809.5 L756.5 808.8 L758.8 808.2 L761.0 807.4 L763.3 806.7 L765.5 805.9 L767.8 805.0 L770.1 804.1 L772.3 803.2 L774.6 802.2 L776.8 801.1 L779.1 800.0 L781.3 798.8 L783.6 797.6 L785.9 796.3 L788.1 794.9 L790.4 793.4 L792.6 791.9 L794.9 790.2 L797.2 788.5 L799.4 786.6 L801.7 784.7 L803.9 782.6 L806.2 780.5 L808.4 778.2 L810.7 775.8 L813.0 773.2 L815.2 770.5 L817.5 767.7 L819.7 764.7 L822.0 761.5 L824.2 758.2 L826.5 754.7 L828.8 751.1 L831.0 747.3 L833.3 743.4 L835.5 739.3 L837.8 735.0 L840.1 730.7 L842.3 726.2 L844.6 721.7 L846.8 717.1 L849.1 712.5 L851.3 707.9 L853.6 703.4 L855.9 699.1 L858.1 694.9 L860.4 691.0 L862.6 687.4 L864.9 684.2 L867.2 681.4 L869.4 679.2 L871.7 677.5 L873.9 676.4 L876.2 675.9 L878.4 676.1 L880.7 676.9 L883.0 678.4 L885.2 680.4 L887.5 683.0 L889.7 686.1 L892.0 689.6 L894.2 693.4 L896.5 697.6 L898.8 702.0 L901.0 706.5 L903.3 711.2 L905.5 715.9 L907.8 720.5 L910.1 725.2 L912.3 729.7 L914.6 734.2 L916.8 738.5 L919.1 742.7 L921.3 746.7 L923.6 750.6 L925.9 754.3 L928.1 757.9 L930.4 761.2 L932.6 764.4 L934.9 767.5 L937.2 770.4 L939.4 773.1 L941.7 775.7 L943.9 778.2 L946.2 780.5 L948.4 782.7 L950.7 784.8 L953.0 786.7 L955.2 788.6 L957.5 790.3 L959.7 792.0 L962.0 793.5 L964.2 795.0 L966.5 796.4 L968.8 797.7 L971.0 799.0 L973.3 800.1 L975.5 801.3 L977.8 802.3 L980.1 803.3 L982.3 804.3 L984.6 805.2 L986.8 806.0 L989.1 806.8 L991.3 807.6 L993.6 808.3 L995.9 809.0 L998.1 809.6 L1000.4 810.2 L1002.6 810.8 L1004.9 811.4 L1007.2 811.9 L1009.4 812.4 L1011.7 812.9 L1013.9 813.3 L1016.2 813.7 L1018.4 814.2 L1020.7 814.5 L1023.0 814.9 L1025.2 815.3 L1027.5 815.6 L1029.7 815.9 L1032.0 816.2 L1034.2 816.5 L1036.5 816.7 L1038.8 817.0 L1041.0 817.2 L1043.3 817.4 L1045.5 817.6 L1047.8 817.8 L1050.1 818.0 L1052.3 818.1 L1054.6 818.3 L1056.8 818.5 L1059.1 818.6 L1061.3 818.7 L1063.6 818.9 L1065.9 819.0 L1068.1 819.1 L1070.4 819.2 L1072.6 819.3 L1074.9 819.4 L1077.2 819.5 L1079.4 819.6 L1081.7 819.7 L1083.9 819.7 L1086.2 819.8 L1088.4 819.9 L1090.7 819.9 L1093.0 820.0 L1095.2 820.1 L1097.5 820.1 L1099.7 820.2 L1102.0 820.2 L1104.2 820.2 L1106.5 820.3 L1108.8 820.3 L1111.0 820.3 L1113.3 820.4 L1115.5 820.4 L1117.8 820.4 L1120.1 820.5 L1122.3 820.5 L1124.6 820.5 L1126.8 820.5 L1129.1 820.5 L1131.3 820.5 L1133.6 820.6 L1135.9 820.6 L1138.1 820.6 L1140.4 820.6 L1142.6 820.6 L1144.9 820.6 L1147.2 820.6 L1149.4 820.6 L1151.7 820.6 L1153.9 820.6 L1156.2 820.6 L1158.4 820.6 L1160.7 820.6 L1163.0 820.6 L1165.2 820.6 L1167.5 820.6 L1169.7 820.6 L1172.0 820.6 L1174.2 820.7 L1176.5 820.7 L1178.8 820.7 L1181.0 820.7 L1183.3 820.7 L1185.5 820.7 L1187.8 820.7 L1190.1 820.7 L1192.3 820.8 L1194.6 820.8 L1196.8 820.8 L1199.1 820.8 L1201.3 820.8 L1203.6 820.8 L1205.9 820.8 L1208.1 820.8 L1210.4 820.8 L1212.6 820.8 L1214.9 820.8 L1217.2 820.8 L1219.4 820.8 L1221.7 820.9 L1223.9 820.9 L1226.2 820.9 L1228.4 820.9 L1230.7 820.9 L1233.0 820.9 L1235.2 820.9 L1237.5 820.9 L1239.7 820.9 L1242.0 820.9 L1244.2 820.9 L1246.5 820.9 L1248.8 820.9 L1251.0 820.9 L1253.3 820.9 L1255.5 820.9 L1257.8 820.9 L1260.1 820.9 L1262.3 820.9 L1264.6 820.9 L1266.8 820.9 L1269.1 820.9 L1271.3 820.9 L1273.6 820.9 L1275.9 820.9 L1278.1 820.9 L1280.4 820.9 L1282.6 820.9" stroke="#2fc3e8" stroke-width="3"/>
<path d="M740.8 807.8 L761.5 800.2 L777.8 790.3 L791.7 780.0 L804.5 766.8 L812.8 757.0 L825.6 739.5 L834.9 724.4 L845.3 707.0 L855.8 691.9 L862.0 686.3 L866.5 684.0 L870.9 683.1 L876.0 684.2 L881.4 687.2 L887.2 694.2 L895.3 707.0 L904.7 722.1 L914.0 738.4 L922.1 751.0 L928.1 757.9 L930.4 761.2 L932.6 764.4 L934.9 767.5 L937.2 770.4 L939.4 773.1 L941.7 775.7 L943.9 778.2 L946.2 780.5 L948.4 782.7 L950.7 784.8 L953.0 786.7 L955.2 788.6 L957.5 790.3 L959.7 792.0 L962.0 793.5 L964.2 795.0 L966.5 796.4 L968.8 797.7 L971.0 799.0 L973.3 800.1 L975.5 801.3 L977.8 802.3 L980.1 803.3 L982.3 804.3 L984.6 805.2 L986.8 806.0 L989.1 806.8 L991.3 807.6 L993.6 808.3 L995.9 809.0 L998.1 809.6 L1000.4 810.2 L1002.6 810.8 L1004.9 811.4 L1007.2 811.9 L1009.4 812.4 L1011.7 812.9 L1013.9 813.3 L1016.2 813.7 L1018.4 814.2 L1020.7 814.5 L1023.0 814.9 L1025.2 815.3 L1027.5 815.6 L1029.7 815.9 L1032.0 816.2 L1034.2 816.5 L1036.5 816.7 L1038.8 817.0 L1041.0 817.2 L1043.3 817.4 L1045.5 817.6 L1047.8 817.8 L1050.1 818.0 L1052.3 818.1 L1054.6 818.3 L1056.8 818.5 L1059.1 818.6 L1061.3 818.7 L1063.6 818.9 L1065.9 819.0 L1068.1 819.1 L1070.4 819.2 L1072.6 819.3 L1074.9 819.4 L1077.2 819.5 L1079.4 819.6 L1081.7 819.7 L1083.9 819.7 L1086.2 819.8 L1088.4 819.9 L1090.7 819.9 L1093.0 820.0 L1095.2 820.1 L1097.5 820.1 L1099.7 820.2 L1102.0 820.2 L1104.2 820.2 L1106.5 820.3 L1108.8 820.3 L1111.0 820.3 L1113.3 820.4 L1115.5 820.4 L1117.8 820.4 L1120.1 820.5 L1122.3 820.5 L1124.6 820.5 L1126.8 820.5 L1129.1 820.5 L1131.3 820.5 L1133.6 820.6 L1135.9 820.6 L1138.1 820.6 L1140.4 820.6 L1142.6 820.6 L1144.9 820.6 L1147.2 820.6 L1149.4 820.6 L1151.7 820.6 L1153.9 820.6 L1156.2 820.6 L1158.4 820.6 L1160.7 820.6 L1163.0 820.6 L1165.2 820.6 L1167.5 820.6 L1169.7 820.6 L1172.0 820.6 L1174.2 820.7 L1176.5 820.7 L1178.8 820.7 L1181.0 820.7 L1183.3 820.7 L1185.5 820.7 L1187.8 820.7 L1190.1 820.7 L1192.3 820.8 L1194.6 820.8 L1196.8 820.8 L1199.1 820.8 L1201.3 820.8 L1203.6 820.8 L1205.9 820.8 L1208.1 820.8 L1210.4 820.8 L1212.6 820.8 L1214.9 820.8 L1217.2 820.8 L1219.4 820.8 L1221.7 820.9 L1223.9 820.9 L1226.2 820.9 L1228.4 820.9 L1230.7 820.9 L1233.0 820.9 L1235.2 820.9 L1237.5 820.9 L1239.7 820.9 L1242.0 820.9 L1244.2 820.9 L1246.5 820.9 L1248.8 820.9 L1251.0 820.9 L1253.3 820.9 L1255.5 820.9 L1257.8 820.9 L1260.1 820.9 L1262.3 820.9 L1264.6 820.9 L1266.8 820.9 L1269.1 820.9 L1271.3 820.9 L1273.6 820.9 L1275.9 820.9 L1278.1 820.9 L1280.4 820.9 L1282.6 820.9" stroke="#b5b5b5" stroke-width="3.1" stroke-dasharray="9.3 8.9"/>
</g>
<circle cx="876.7" cy="675.6" r="3.9" fill="#62bedb"/>
<rect x="718.6" y="598.3" width="564.9" height="224.10000000000002" fill="none" stroke="#fff" stroke-width="1.3"/>
<!-- legend -->
<g font-family="'DejaVu Sans','Liberation Sans',sans-serif" fill="#fff" font-size="12.25">
<text x="1336.2" y="372.1" font-weight="bold" font-size="13">Layers</text>
<text x="1371.2" y="391" font-weight="bold" font-size="11.9">1: Perforated Plate</text>
<text x="1371.2" y="406">Thickness: 19.00mm (3/4in)</text>
<text x="1371.2" y="421.9">Hole diameter: 6.00mm (15/64in)</text>
<text x="1371.2" y="438">Hole spacing: 60.00mm (2 23/64in)</text>
<text x="1371.2" y="453">Open area: 0.79%</text>
<text x="1371.2" y="471.8" font-weight="bold" font-size="11.9">2: Semi-Rigid Insulation</text>
<text x="1371.2" y="487.1">Thickness: 100.00mm (3 15/16in)</text>
<text x="1371.2" y="502.7">Flow Resistivity: 27k·rayls/m</text>
<text x="1371.2" y="522" font-weight="bold" font-size="11.9">3: Air Layer</text>
<text x="1371.2" y="537.1">Thickness: 50.00mm (1 31/32in)</text>
<text x="1371.2" y="555.9" font-weight="bold" font-size="11.9">4: Rigid Backing</text>
<text x="1336.2" y="586.1" font-weight="bold" font-size="13">Curves</text>
<text x="1371.2" y="604.6">Diffuse Incidence</text>
<text x="1371.2" y="623.8">Diffuse Incidence (1/1 Oct.)</text>
<text x="1371.2" y="642.7">Normal Incidence</text>
</g>
<g fill="none">
<path d="M1336.2 417.6 H1366.2" stroke="#6a5acd" stroke-width="5.2"/>
<path d="M1336.2 482.8 H1366.2" stroke="#f2784e" stroke-width="5"/>
<path d="M1336.2 524.5 H1366.2" stroke="#a2a2a2" stroke-width="5"/>
<path d="M1336.2 551.4 H1366.2" stroke="#ffffff" stroke-width="5.4"/>
<path d="M1336.2 600.1 H1366.2" stroke="#2fc3e8" stroke-width="2.8"/>
<path d="M1336.2 619.2 H1366.2" stroke="#8f4f68" stroke-width="2.8" stroke-dasharray="8.5 3.5 2.8 3.5"/>
<path d="M1336.2 638.4 H1366.2" stroke="#9a9a9a" stroke-width="2.8" stroke-dasharray="8.6 9.4"/>
</g>
</svg>
</body>
</html>
